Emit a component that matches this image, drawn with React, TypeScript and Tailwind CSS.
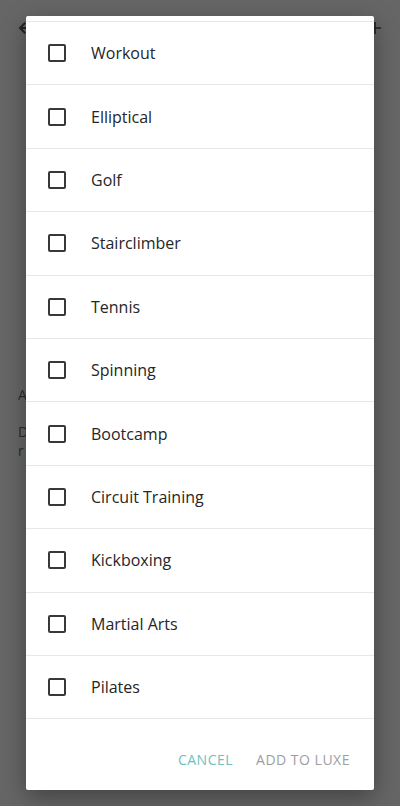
import React from "react";

const items = [
  "Workout",
  "Elliptical",
  "Golf",
  "Stairclimber",
  "Tennis",
  "Spinning",
  "Bootcamp",
  "Circuit Training",
  "Kickboxing",
  "Martial Arts",
  "Pilates",
];

export default function App() {
  return (
    <div
      className="relative h-[806px] w-[400px] overflow-hidden bg-[#666666] text-[#262626]"
      style={{ fontFamily: '"Open Sans", "Liberation Sans", sans-serif' }}
    >
      {/* underlying page */}
      <div className="flex h-[56px] items-center justify-between px-[17px]">
        <svg width="18" height="18" viewBox="0 0 24 24" fill="none" stroke="#222" strokeWidth="2.5">
          <path d="M20 12H5M11 5l-7 7 7 7" />
        </svg>
        <svg width="16" height="16" viewBox="0 0 24 24" fill="none" stroke="#222" strokeWidth="2.5">
          <path d="M12 3v18M3 12h18" />
        </svg>
      </div>
      <div className="px-[18px] pt-[328px] text-[14px] text-[#2a2a2a]">
        <div className="leading-[22px]">A</div>
        <div className="mt-[16px] leading-[19px]">D</div>
        <div className="leading-[19px]">r</div>
      </div>

      {/* dialog */}
      <div className="absolute left-[26px] top-[16px] flex h-[774px] w-[348px] flex-col rounded-[2px] bg-white shadow-[0_8px_24px_rgba(0,0,0,0.35)]">
        <div className="h-[5px]" />
        <div className="border-t border-[#e6e6e6]">
          {items.map((it) => (
            <div
              key={it}
              className="flex h-[63.4px] items-center border-b border-[#e6e6e6] pl-[22px]"
            >
              <div className="h-[18px] w-[18px] rounded-[2px] border-2 border-[#383838]" />
              <span className="ml-[25px] text-[16px] text-[#262626]">{it}</span>
            </div>
          ))}
        </div>
        <div className="flex flex-1 items-end justify-end gap-[23px] pb-[20px] pr-[24px] text-[14px] tracking-[0.5px]">
          <span className="text-[#6fbfbf]">CANCEL</span>
          <span className="text-[#9e9e9e]">ADD TO LUXE</span>
        </div>
      </div>
    </div>
  );
}
